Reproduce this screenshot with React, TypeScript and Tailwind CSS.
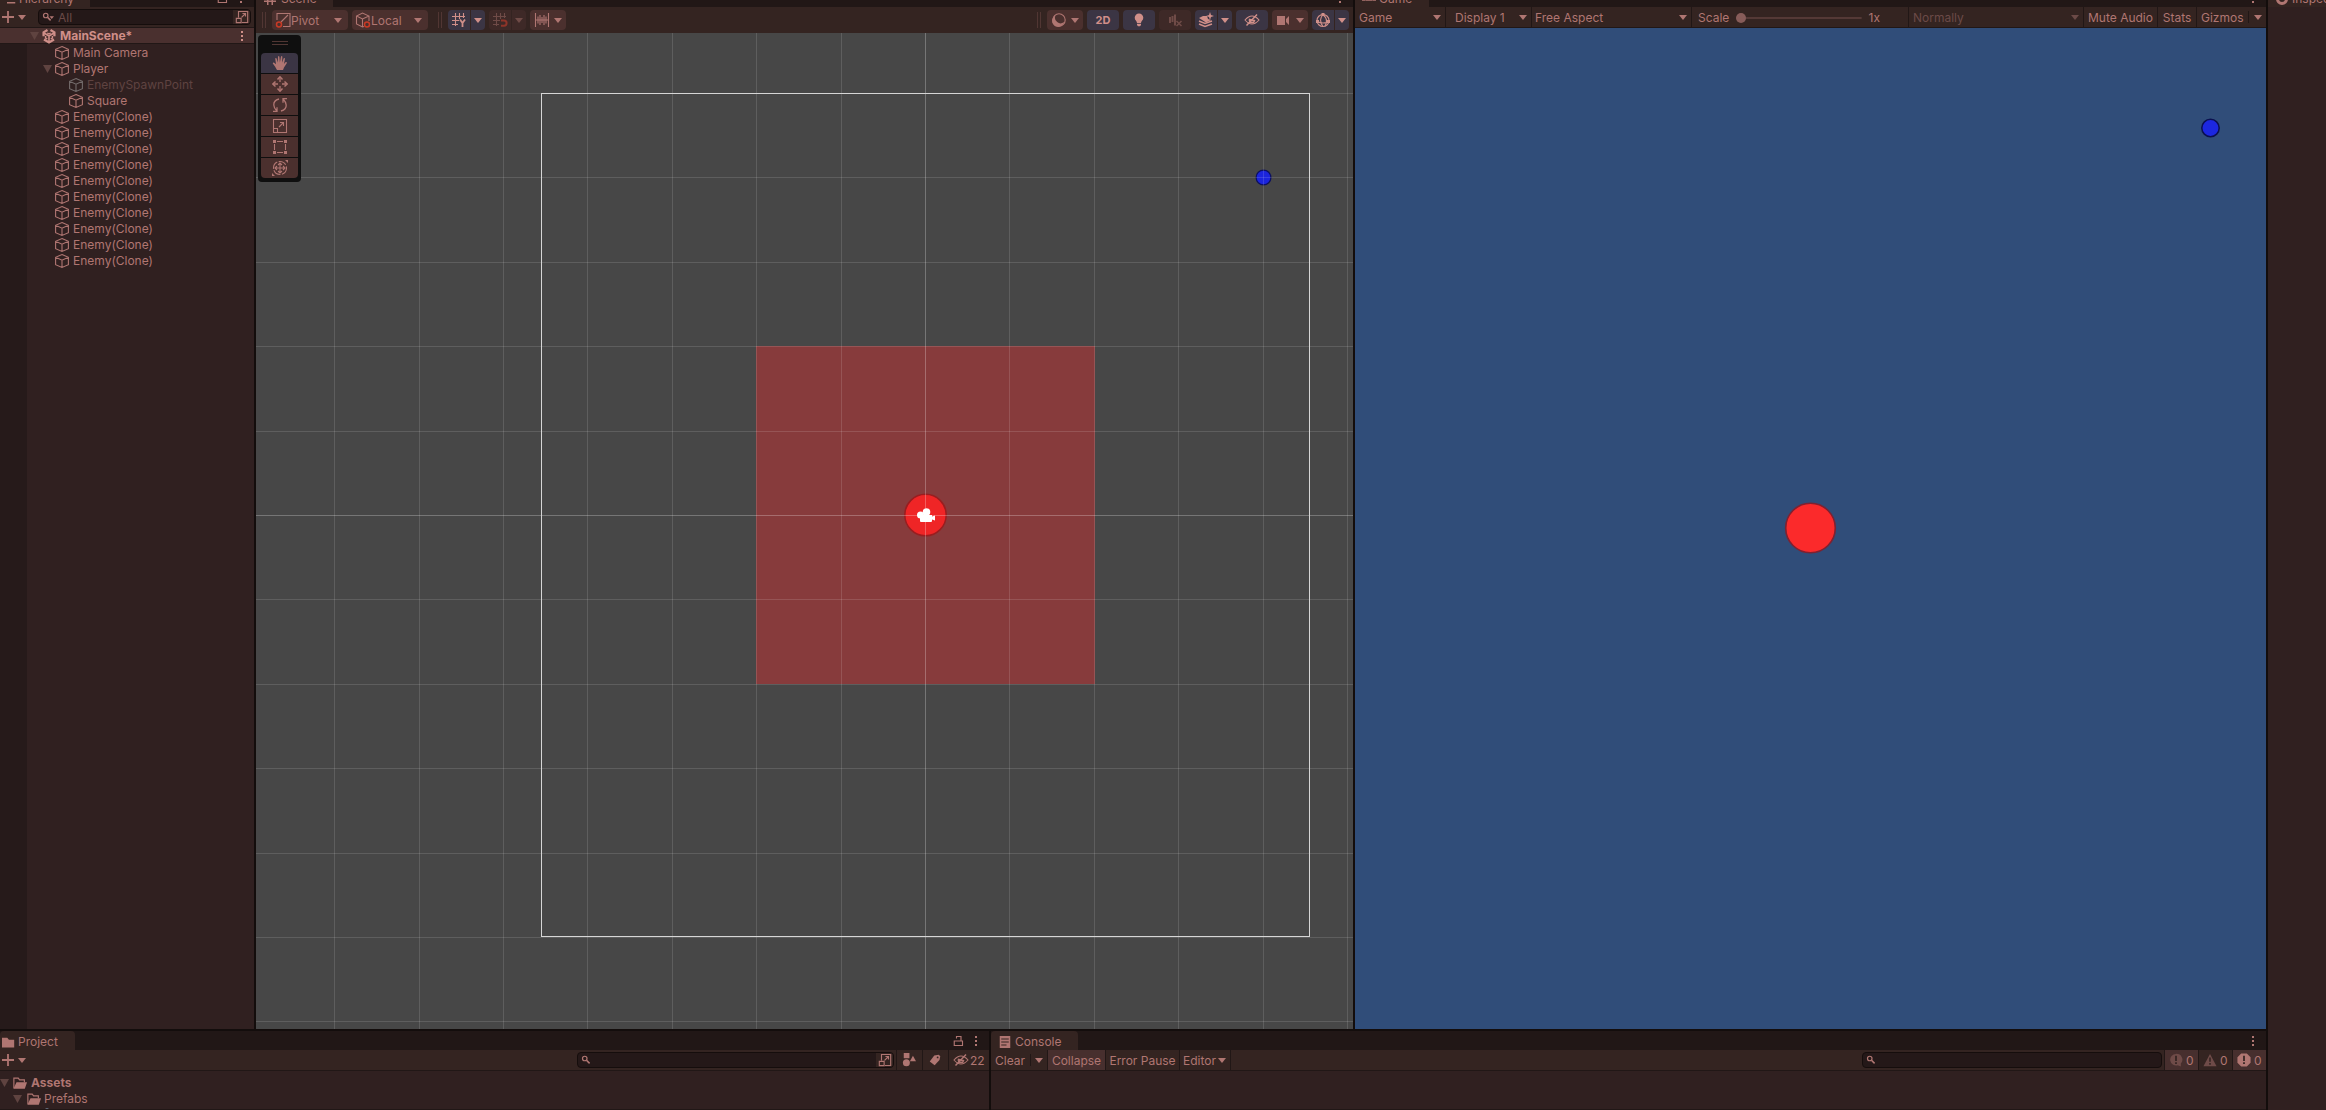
import { useState, type ReactNode } from "react";

const iconCls = "size-4 shrink-0";

function Svg({ children, className = iconCls }: { children: ReactNode; className?: string }) {
  return (
    <svg viewBox="0 0 16 16" className={className} fill="none" stroke="currentColor" strokeWidth="1.1" aria-hidden="true">
      {children}
    </svg>
  );
}

function Caret({ className = "" }: { className?: string }) {
  return (
    <svg viewBox="0 0 8 5" className={`h-[5px] w-2 shrink-0 ${className}`} fill="currentColor" aria-hidden="true">
      <path d="M0 0h8L4 5z" />
    </svg>
  );
}

function Foldout() {
  return (
    <svg viewBox="0 0 9 8" className="h-2 w-[9px] shrink-0 text-[#5f4340]" fill="currentColor" aria-hidden="true">
      <path d="M0 0h9L4.5 8z" />
    </svg>
  );
}

const CubeIcon = ({ className }: { className?: string }) => (
  <Svg className={className}>
    <path d="M8 1.5 14.400 4.300v7.400L8 14.500 1.600 11.700V4.300zM1.600 4.300 8 7.200l6.400-2.900M8 7.200v7.300" />
  </Svg>
);

const UnityIcon = () => (
  <Svg>
    <g strokeWidth="2.3">
      <path d="M8 8 8 14.500M8 8 3 5M8 8l5-3" strokeWidth="1.6" />
      <path d="M6.500 2 2.600 4.300v4M9.500 2l3.900 2.300v4M3 11.400l5 3 5-3" />
      <path d="M6.300 5 8 6l1.700-1M4.600 8v2L6.300 11M11.400 8v2L9.700 11" strokeWidth="1.4" />
    </g>
  </Svg>
);

const SearchIcon = ({ menu = false }: { menu?: boolean }) => (
  <Svg className="size-3 shrink-0">
    <circle cx="5" cy="6" r="3" strokeWidth="1.6" />
    <path d="M7.500 8.500 11.500 12.500" strokeWidth="2" />
    {menu && <path d="M10 7h6l-3 3.500z" fill="currentColor" stroke="none" />}
  </Svg>
);

const PickerIcon = () => (
  <Svg className="size-[14px] shrink-0">
    <path d="M4 8.500V1.700h10.500v12.600H8M1.500 9.500H7v5H1.500zM7.500 8.500 12 4M8.500 4H12v3.500" strokeWidth="1.3" />
  </Svg>
);

const PlusIcon = () => (
  <Svg className="size-3 shrink-0">
    <path d="M8 0v16M0 8h16" strokeWidth="2.4" />
  </Svg>
);

const KebabIcon = () => (
  <svg viewBox="0 0 2 10" className="h-[10px] w-[2px] shrink-0" fill="currentColor" aria-hidden="true">
    <path d="M0 0h2v2H0zM0 4h2v2H0zM0 8h2v2H0z" />
  </svg>
);

const LockIcon = () => (
  <Svg className="size-3 shrink-0">
    <path d="M3 8h11v6H3zM6 4.500V2h6v6" strokeWidth="1.5" />
  </Svg>
);

const HiddenEyeIcon = () => (
  <Svg>
    <path d="M1 8q7-8 14 0-7 8-14 0z" />
    <path d="M5.500 7.500a2.500 2.500 0 0 0 5 1zM2.500 13.500 13 2.500" strokeWidth="1.5" />
  </Svg>
);

const FolderIcon = ({ open = false }: { open?: boolean }) =>
  open ? (
    <Svg className="size-[14px] shrink-0">
      <path d="M1 14V2.500h5l1.500 2H13V7" strokeWidth="1.3" />
      <path d="M4 7h12l-2.500 7.500h-13z" fill="currentColor" stroke="none" />
    </Svg>
  ) : (
    <Svg className="size-[13px] shrink-0">
      <path d="M0 2h6.500l2 2.500H15V14H0z" fill="currentColor" stroke="none" />
    </Svg>
  );

const GridIcon = ({ children }: { children?: ReactNode }) => (
  <Svg>
    <path d="M4.500 1v13M8.500 1v6M12.500 1v5M1 4.500h13M1 8.500h7M1 12.500h6" />
    {children}
  </Svg>
);

const TOOLS: { name: string; icon: ReactNode }[] = [
  {
    name: "View",
    icon: (
      <Svg>
        <path
          d="M5 15 3 11.500.8 8.400q0-1.200 1.400-.6L4 9.300 3.200 3.600q.4-1.200 1.300-.3L5.800 7.600 6 1.700q.6-1.200 1.400 0L7.900 7.400 9 1.500q.8-1 1.400.2L10 7.800l1.700-4.500q.9-.8 1.300.3L12 9l1.700-2q1.400-.2 1.200.9L12 12.500 11 15z"
          fill="currentColor"
          stroke="none"
        />
      </Svg>
    ),
  },
  {
    name: "Move",
    icon: (
      <Svg>
        <path d="M8 2v4M8 10v4M2 8h4M10 8h4" strokeWidth="1.3" />
        <path d="M5.500 3.500 8 .8l2.500 2.700M5.500 12.500 8 15.200l2.500-2.700M3.500 5.500.8 8l2.700 2.500M12.500 5.500 15.200 8l-2.700 2.500" strokeWidth="1.5" />
      </Svg>
    ),
  },
  {
    name: "Rotate",
    icon: (
      <Svg>
        <path d="M7 2Q1.500 3.500 1.800 8q.2 3 2.700 5.500M9 14q5.500-1.500 5.200-6-.2-3-2.700-5.500M1 14.300h4v-4M15 1.700h-4v4" strokeWidth="1.3" />
      </Svg>
    ),
  },
  {
    name: "Scale",
    icon: (
      <Svg>
        <path d="M1.500 1.500h13v13h-13zM1.500 10.500h4v4M7 9l4.500-4.500M8 4.500h3.500V8" />
      </Svg>
    ),
  },
  {
    name: "Rect",
    icon: (
      <Svg>
        <path d="M5 2.500h6M5 13.500h6M2.500 5v6M13.500 5v6" />
        <path d="M1 1h3v3H1zM12 1h3v3h-3zM1 12h3v3H1zM12 12h3v3h-3z" fill="currentColor" stroke="none" />
      </Svg>
    ),
  },
  {
    name: "Transform",
    icon: (
      <Svg>
        <circle cx="8" cy="8" r="6.500" strokeDasharray="8 1.500" />
        <path d="M8 3v10M3 8h10M6 5l2-2 2 2M6 11l2 2 2-2M5 6 3 8l2 2M11 6l2 2-2 2" />
        <path d="M13 0h3v3zM0 13v3h3z" fill="currentColor" stroke="none" />
      </Svg>
    ),
  },
];

function Tab({ icon, className = "", children }: { icon: ReactNode; className?: string; children: ReactNode }) {
  return (
    <button type="button" className={`flex h-[19px] shrink-0 items-center rounded-t-sm bg-[#342421] pt-[3px] ${className}`}>
      {icon}
      {children}
    </button>
  );
}

function TopTabs({ tab, children }: { tab: ReactNode; children?: ReactNode }) {
  return (
    <div className="flex h-[7px] shrink-0 items-end overflow-hidden bg-[#211716]">
      {tab}
      <div className="ml-auto flex h-[19px] shrink-0 items-center gap-3 pr-3">{children}</div>
    </div>
  );
}

function SearchBox({ id, label, menu = false, placeholder, picker = false, className = "" }: {
  id: string;
  label: string;
  menu?: boolean;
  placeholder?: string;
  picker?: boolean;
  className?: string;
}) {
  return (
    <div className={`flex h-4 items-center overflow-hidden rounded border border-[#150d0c] bg-[#241818] ${className}`}>
      <label htmlFor={id} aria-label={label} className="pl-[3px]">
        <SearchIcon menu={menu} />
      </label>
      <input id={id} placeholder={placeholder} className="h-full min-w-0 flex-1 bg-transparent pl-1 outline-none placeholder:text-[#6b4a47]" />
      {picker && (
        <button type="button" aria-label="Search picker" className="flex h-full w-[17px] items-center justify-center bg-[#342421]">
          <PickerIcon />
        </button>
      )}
    </div>
  );
}

function Dropdown({ label, options, className = "", icon, caret = "right-1" }: {
  label: string;
  options: string[];
  className?: string;
  icon?: ReactNode;
  caret?: string;
}) {
  return (
    <label className={`relative flex h-5 shrink-0 items-center ${className}`}>
      {icon}
      <select aria-label={label} className="h-full w-full appearance-none bg-transparent pt-px outline-none">
        {options.map((o) => (
          <option key={o}>{o}</option>
        ))}
      </select>
      <Caret className={`pointer-events-none absolute ${caret}`} />
    </label>
  );
}

function ToolButton({ label, className, children }: { label: string; className: string; children: ReactNode }) {
  return (
    <button type="button" aria-label={label} className={`flex h-5 shrink-0 items-center justify-center ${className}`}>
      {children}
    </button>
  );
}

const on = "bg-[#3b3544] text-[#d08f89]";
const off = "bg-[#4b302e]";
const dim = "bg-[#3e2927] text-[#6f4b47]";

function Split({ label, tone, children }: { label: string; tone: string; children: ReactNode }) {
  return (
    <div className="flex gap-px">
      <ToolButton label={label} className={`w-[22px] rounded-l-sm ${tone}`}>{children}</ToolButton>
      <ToolButton label={`${label} options`} className={`w-[14px] rounded-r-sm ${tone}`}>
        <Caret />
      </ToolButton>
    </div>
  );
}

const Grip = () => <div className="h-4 w-1 shrink-0 border-x border-[#513633]" />;

function Row({ depth, name, open = false, disabled = false }: { depth: 1 | 2; name: string; open?: boolean; disabled?: boolean }) {
  return (
    <li className={`flex h-4 items-center gap-[3px] ${depth === 1 ? "pl-[43px]" : "pl-[57px]"}`}>
      <span className="flex w-3 shrink-0 justify-start">{open && <Foldout />}</span>
      <CubeIcon className={`-ml-1 size-4 shrink-0 ${disabled ? "text-[#736b6b]" : ""}`} />
      <span className={disabled ? "text-[#5f4341]" : ""}>{name}</span>
    </li>
  );
}

function Hierarchy() {
  return (
    <section className="flex w-[254px] shrink-0 flex-col bg-[#302020]">
      <TopTabs tab={<Tab className="w-[90px] gap-[3px] pl-1" icon={<Svg className="size-3"><path d="M1 3h8M4 8h11M4 13h11" strokeWidth="2" /></Svg>}>Hierarchy</Tab>}>
        <LockIcon />
        <KebabIcon />
      </TopTabs>
      <div className="flex h-[21px] shrink-0 items-center border-b border-[#211716] bg-[#342421] pr-[3px] pl-[2px]">
        <button type="button" aria-label="Create" className="flex items-center gap-1">
          <PlusIcon />
          <Caret />
        </button>
        <SearchBox id="hierarchy-search" label="Search hierarchy" menu placeholder="All" picker className="ml-3 flex-1" />
      </div>
      <div className="flex h-4 shrink-0 items-center border-b border-[#211716] bg-[#4a302f] pr-[11px] pl-[30px] font-bold text-[#d08f89]">
        <Foldout />
        <span className="ml-[2px] flex">
          <UnityIcon />
        </span>
        <span className="ml-[3px]">MainScene*</span>
        <span className="ml-auto">
          <KebabIcon />
        </span>
      </div>
      <div className="flex min-h-0 flex-1">
        <div className="w-[27px] shrink-0 bg-[#261a1a]" />
        <ul className="-ml-[27px] flex-1 pt-px">
          <Row depth={1} name="Main Camera" />
          <Row depth={1} name="Player" open />
          <Row depth={2} name="EnemySpawnPoint" disabled />
          <Row depth={2} name="Square" />
          {Array.from({ length: 10 }, (_, i) => (
            <Row key={i} depth={1} name="Enemy(Clone)" />
          ))}
        </ul>
      </div>
    </section>
  );
}

const UNIT = 84.4;
const CX = 925.5;
const CY = 515.5;
const COLUMNS = [-7, -6, -5, -4, -3, -2, -1, 0, 1, 2, 3, 4, 5];
const LINES = [-5, -4, -3, -2, -1, 0, 1, 2, 3, 4, 5, 6];
const snap = (v: number) => Math.floor(v) + 0.5;

function GridLines({ opacity }: { opacity: number }) {
  return (
    <g stroke="#fff">
      {COLUMNS.map((c) => (
        <path key={c} d={`M${snap(CX + c * UNIT)} 0V1110`} strokeOpacity={c === 0 ? 0.26 : opacity} />
      ))}
      {LINES.map((l) => (
        <path key={l} d={`M0 ${snap(CY + l * UNIT)}H2326`} strokeOpacity={l === 0 ? 0.26 : opacity} />
      ))}
    </g>
  );
}

function SceneCanvas() {
  return (
    <svg viewBox="256 33 1097 996" preserveAspectRatio="xMidYMid slice" className="block h-full w-full bg-[#474747]" role="img" aria-label="Scene">
      <rect x="756" y="346" width="339" height="338" fill="#873b3c" />
      <circle cx="925.5" cy="515" r="20.700" fill="#ef2526" stroke="#9a1d1f" strokeWidth="1.5" />
      <circle cx="1263.5" cy="177.5" r="7.400" fill="#1b24dc" stroke="#0c1060" strokeWidth="1.2" />
      <GridLines opacity={0.13} />
      <rect x="541.5" y="93.5" width="768" height="843" fill="none" stroke="#d6d6d6" />
      <g fill="#fff">
        <circle cx="920.5" cy="515" r="3.500" />
        <circle cx="926.5" cy="512" r="3.800" />
        <path d="M920 515h12v1.500l3-1v5l-3-1v1.500q0 1-1 1h-10q-1 0-1-1z" />
      </g>
    </svg>
  );
}

function Scene() {
  const [tool, setTool] = useState("View");

  return (
    <section className="flex min-w-0 flex-[1097] flex-col">
      <TopTabs tab={<Tab className="w-[77px] gap-[5px] pl-2" icon={<Svg className="size-3"><path d="M5 0v16M11 0v16M0 5h16M0 11h16" strokeWidth="2" /></Svg>}>Scene</Tab>}>
        <KebabIcon />
      </TopTabs>
      <div className="flex h-[26px] shrink-0 items-center gap-1 bg-[#342421] pr-1 pl-[6px]">
        <Grip />
        <Dropdown
          label="Tool handle position"
          options={["Pivot", "Center"]}
          className={`ml-[2px] w-[76px] rounded-sm pl-[3px] ${off}`}
          caret="right-[6px]"
          icon={
            <Svg>
              <path d="M2 8V1.500h13v13H8M6 10l7-7" />
              <circle cx="4" cy="12.5" r="2.500" stroke="#c93a25" strokeWidth="1.5" />
            </Svg>
          }
        />
        <Dropdown
          label="Tool handle rotation"
          options={["Local", "Global"]}
          className={`w-[76px] rounded-sm pl-[3px] ${off}`}
          caret="right-[6px]"
          icon={
            <Svg>
              <path d="M9 14.500 7.500 15 1.500 12V4l6-3 6.500 3v5M1.500 4l6 3L14 4M7.500 7v8" />
              <circle cx="12" cy="12.5" r="2.500" stroke="#c93a25" strokeWidth="1.5" />
            </Svg>
          }
        />
        <div className="mr-[2px] ml-[6px]">
          <Grip />
        </div>
        <Split label="Grid visibility" tone={on}>
          <GridIcon>
            <path d="m9 7.500 2.500 3.500L14 7.500M11.500 11v4" strokeWidth="1.8" />
          </GridIcon>
        </Split>
        <Split label="Grid snapping" tone={dim}>
          <GridIcon>
            <path d="M9 8.500h3a2.600 2.600 0 0 1 0 5.200H9" stroke="#8f3429" strokeWidth="2" />
          </GridIcon>
        </Split>
        <ToolButton label="Increment snapping" className={`w-9 gap-1 rounded-sm ${off}`}>
          <Svg>
            <path d="M1.500 1v14M14.500 1v14M4 4.500v7M6 3v10M8 5v6M10 3v10M12 4.500v7M1 8h14" />
          </Svg>
          <Caret />
        </ToolButton>
        <div className="mr-[2px] ml-auto">
          <Grip />
        </div>
        <ToolButton label="Draw mode" className={`w-9 gap-1 rounded-sm ${off}`}>
          <Svg>
            <circle cx="8" cy="8" r="6.200" />
            <path d="M13 10A5.500 5.500 0 0 1 4.500 3.500 6 6 0 1 0 13 10z" fill="currentColor" stroke="none" />
          </Svg>
          <Caret />
        </ToolButton>
        <ToolButton label="2D view" className={`w-8 rounded-sm text-[11px] font-bold ${on}`}>2D</ToolButton>
        <ToolButton label="Scene lighting" className={`w-8 rounded-sm ${on}`}>
          <Svg>
            <path d="M8 1.500a4.300 4.300 0 0 0-4.300 4.300C3.700 8.500 6 9 6 11h4c0-2 2.300-2.500 2.300-5.200A4.300 4.300 0 0 0 8 1.500zM6 11.800h4V13l-1 1.300H7L6 13z" fill="currentColor" stroke="none" />
          </Svg>
        </ToolButton>
        <ToolButton label="Scene audio" className={`w-8 rounded-sm ${dim}`}>
          <Svg>
            <path d="M3 5v6M5.500 4v6M8 2.500v11" strokeWidth="2" />
            <path d="m9.500 9 5 5M14.500 9l-5 5" strokeWidth="1.5" />
          </Svg>
        </ToolButton>
        <Split label="Scene effects" tone={on}>
          <Svg>
            <path d="M1 6 5 4h4l1 3 3 1-5 2.500z" fill="currentColor" stroke="none" />
            <path d="m1 9 6 2.500L14 9M1 12l6 2.500L14 12" strokeWidth="1.5" />
            <path d="m12 0 1 3 3 1-3 1-1 3-1-3-3-1 3-1z" fill="currentColor" stroke="none" />
          </Svg>
        </Split>
        <ToolButton label="Scene visibility" className={`w-8 rounded-sm ${on}`}>
          <HiddenEyeIcon />
        </ToolButton>
        <ToolButton label="Scene camera" className={`w-9 gap-1 rounded-sm ${off}`}>
          <Svg>
            <path d="M1 4h8v9H1zM10 7l3-3v9l-3-3z" fill="currentColor" stroke="none" />
          </Svg>
          <Caret />
        </ToolButton>
        <Split label="Gizmos" tone={on}>
          <Svg>
            <circle cx="8" cy="8.5" r="6" />
            <path d="M8 2.500Q3 8 8 14.500M8 2.500Q14 8 10 14M2 9.500q6 3 12 0" />
            <path d="M6.500 1h3v3h-3zM1 8h3v3H1zM12 8h3v3h-3z" fill="currentColor" stroke="none" />
          </Svg>
        </Split>
      </div>
      <div className="relative min-h-0 flex-1">
        <SceneCanvas />
        <div className="absolute top-[2px] left-[2px] flex w-[43px] flex-col items-center rounded bg-[#0f0f0f] px-[3px] pt-[6px] pb-1">
          <div className="mb-2 h-1 w-4 border-y border-[#513633]" />
          <div className="flex w-full flex-col gap-px overflow-hidden rounded-sm">
            {TOOLS.map((t) => (
              <button
                key={t.name}
                type="button"
                aria-label={t.name}
                aria-pressed={tool === t.name}
                onClick={() => setTool(t.name)}
                className={`flex h-5 items-center justify-center ${tool === t.name ? "bg-[#3b3544]" : "bg-[#4b302e]"}`}
              >
                {t.icon}
              </button>
            ))}
          </div>
        </div>
      </div>
    </section>
  );
}

const cell = "flex h-5 shrink-0 items-center justify-center border-r border-[#211716] pt-px";

function Game() {
  return (
    <section className="flex min-w-0 flex-[911] flex-col">
      <TopTabs tab={<Tab className="w-[74px] gap-[3px] pl-[7px]" icon={<Svg className="size-[14px]"><path d="M1 10a3 3 0 0 1 6 0M9 10a3 3 0 0 1 6 0" strokeWidth="5" /></Svg>}>Game</Tab>}>
        <KebabIcon />
      </TopTabs>
      <div className="flex h-[21px] shrink-0 items-center border-b border-[#211716] bg-[#342421]">
        <Dropdown label="View type" options={["Game", "Simulator"]} className="w-[91px] border-r border-[#211716] pl-1" />
        <Dropdown label="Display" options={["Display 1", "Display 2"]} className="w-[86px] border-r border-[#211716] pl-[9px]" />
        <Dropdown label="Aspect" options={["Free Aspect", "16:9 Aspect"]} className="w-40 border-r border-[#211716] pl-[3px]" />
        <div className="flex h-5 min-w-0 flex-1 items-center border-r border-[#211716] pt-px pr-[28px] pl-[6px]">
          <label htmlFor="scale">Scale</label>
          <input
            id="scale"
            type="range"
            min={1}
            max={5}
            step={0.1}
            defaultValue={1}
            className="mx-[7px] h-[10px] min-w-0 flex-1 appearance-none bg-[linear-gradient(#543936,#543936)] bg-[length:100%_2px] bg-center bg-no-repeat [&::-webkit-slider-thumb]:size-[10px] [&::-webkit-slider-thumb]:appearance-none [&::-webkit-slider-thumb]:rounded-full [&::-webkit-slider-thumb]:bg-[#875c59]"
          />
          <output htmlFor="scale">1x</output>
        </div>
        <Dropdown label="Play mode focus" options={["Normally", "Maximized"]} className="w-[175px] border-r border-[#211716] pl-1 text-[#6b4a47]" />
        <button type="button" className={`${cell} w-[74px]`}>Mute Audio</button>
        <button type="button" className={`${cell} w-[39px]`}>Stats</button>
        <button type="button" className="flex h-5 w-[51px] shrink-0 items-center pt-px pl-1">Gizmos</button>
        <button type="button" aria-label="Gizmo options" className="flex h-3 w-[18px] shrink-0 items-center justify-center border-l border-[#211716]">
          <Caret />
        </button>
      </div>
      <svg viewBox="1355 28 911 1001" preserveAspectRatio="xMidYMid slice" className="block min-h-0 w-full flex-1 bg-[#304d79]" role="img" aria-label="Game view">
        <circle cx="1810.5" cy="528" r="24.800" fill="#fb2a2b" stroke="#7f2130" strokeWidth="1.6" />
        <circle cx="2210.5" cy="128" r="8.700" fill="#1c27e0" stroke="#0b1050" strokeWidth="1.5" />
      </svg>
    </section>
  );
}

function Project() {
  return (
    <section className="flex min-w-0 flex-[989] flex-col bg-[#302020]">
      <div className="flex h-[19px] shrink-0 items-end bg-[#211716]">
        <Tab className="w-[75px] gap-[3px] pl-[2px]" icon={<FolderIcon />}>Project</Tab>
        <div className="ml-auto flex h-full items-center gap-[11px] pr-3">
          <LockIcon />
          <KebabIcon />
        </div>
      </div>
      <div className="flex h-[21px] shrink-0 items-center border-b border-[#211716] bg-[#342421] pl-[2px]">
        <button type="button" aria-label="Create asset" className="flex items-center gap-1">
          <PlusIcon />
          <Caret />
        </button>
        <SearchBox id="project-search" label="Search project" picker className="mr-[2px] ml-auto w-[317px]" />
        <button type="button" aria-label="Search by type" className="flex h-5 w-[26px] items-center border-l border-[#211716] pl-[5px]">
          <Svg className="size-[14px]">
            <path d="M2 0h6.500v6H2zM9 9.500 12.500 3 16 9.500z" fill="currentColor" stroke="none" />
            <circle cx="5" cy="11" r="4" fill="currentColor" stroke="none" />
          </Svg>
        </button>
        <button type="button" aria-label="Search by label" className="flex h-5 w-[26px] items-center border-l border-[#211716] pl-[6px]">
          <Svg className="size-3">
            <path d="m1 10 6-8 6-1 2 2-1 5-6.500 7z" fill="currentColor" stroke="none" />
            <circle cx="11.5" cy="4.5" r="1.200" fill="#342421" stroke="none" />
          </Svg>
        </button>
        <button type="button" aria-label="Hidden packages" className="flex h-5 w-[41px] items-center border-l border-[#211716] pl-1">
          <HiddenEyeIcon />
          <span className="pt-px pl-px">22</span>
        </button>
      </div>
      <ul className="min-h-0 flex-1 overflow-hidden border-b border-[#211716] pt-1">
        <li className="flex h-4 items-center font-bold">
          <Foldout />
          <span className="mx-1 flex">
            <FolderIcon open />
          </span>
          Assets
        </li>
        <li className="flex h-4 items-center pl-[13px]">
          <Foldout />
          <span className="mr-[3px] ml-[5px] flex">
            <FolderIcon open />
          </span>
          Prefabs
        </li>
        <li className="flex h-4 items-start pt-px pl-10 text-[#6b7a8c]">
          <Svg className="size-[14px] shrink-0">
            <path d="m8 0 6.500 3v8.500L8 15l-6.500-3.500V3z" fill="currentColor" stroke="none" />
          </Svg>
        </li>
      </ul>
    </section>
  );
}

function CountToggle({ label, pressed, icon, tone = "" }: { label: string; pressed: boolean; icon: ReactNode; tone?: string }) {
  return (
    <button
      type="button"
      aria-label={label}
      aria-pressed={pressed}
      className={`flex h-5 w-[34px] shrink-0 items-center gap-[3px] border-l border-[#211716] pl-1 ${pressed ? "bg-[#472f2e]" : ""}`}
    >
      <span className={tone}>{icon}</span>
      <span className="pt-px">0</span>
    </button>
  );
}

function Console() {
  return (
    <section className="flex min-w-0 flex-[1275] flex-col bg-[#302020]">
      <div className="flex h-[19px] shrink-0 items-end bg-[#211716] pr-3">
        <Tab
          className="w-[87px] gap-1 pl-2"
          icon={
            <Svg className="size-3">
              <path d="M1 0h14v16H1z" fill="currentColor" stroke="none" />
              <path d="M3 4h10M3 8h10M3 12h7" stroke="#342421" strokeWidth="1.5" />
            </Svg>
          }
        >
          Console
        </Tab>
        <span className="mb-1 ml-auto">
          <KebabIcon />
        </span>
      </div>
      <div className="flex h-[21px] shrink-0 items-center border-b border-[#211716] bg-[#342421]">
        <button type="button" className="flex h-5 w-[39px] shrink-0 items-center pt-px pl-1">Clear</button>
        <button type="button" aria-label="Clear options" className="flex h-3 w-[17px] shrink-0 items-center justify-center border-l border-[#211716]">
          <Caret />
        </button>
        <button type="button" className={`${cell} w-[59px] border-l bg-[#472f2e]`}>Collapse</button>
        <button type="button" className={`${cell} w-[74px]`}>Error Pause</button>
        <Dropdown label="Log target" options={["Editor", "Player"]} className="w-[51px] border-r border-[#211716] pl-[3px]" />
        <SearchBox id="console-search" label="Search console" className="mr-[2px] ml-auto w-[300px]" />
        <CountToggle
          label="Messages"
          pressed
          tone="text-[#6f4b48]"
          icon={
            <Svg className="size-[14px]">
              <path d="M8 1a7 6.600 0 1 0 2 13l3.500 1.500V12A7 6.600 0 0 0 8 1z" fill="currentColor" stroke="none" />
              <path d="M8 3v6M8 10.500v2" stroke="#342421" strokeWidth="2" />
            </Svg>
          }
        />
        <CountToggle
          label="Warnings"
          pressed={false}
          tone="text-[#6f4b48]"
          icon={
            <Svg className="size-[14px]">
              <path d="M8 1 15.500 15H.5z" fill="currentColor" stroke="none" />
              <path d="M8 5v5M8 11.500v2" stroke="#342421" strokeWidth="1.8" />
            </Svg>
          }
        />
        <CountToggle
          label="Errors"
          pressed
          icon={
            <Svg className="size-[14px]">
              <path d="M4.800.5h6.400l4.300 4.300v6.400l-4.300 4.300H4.800L.5 11.200V4.800z" fill="currentColor" stroke="none" />
              <path d="M8 3v6M8 10.500v2" stroke="#342421" strokeWidth="2" />
            </Svg>
          }
        />
      </div>
      <div className="min-h-0 flex-1 border-b border-[#211716]" />
    </section>
  );
}

export default function App() {
  return (
    <div className="flex h-screen gap-[2px] overflow-hidden bg-[#130d0c] font-['Inter',sans-serif] text-[12px] leading-4 text-[#b07672]">
      <div className="flex min-w-0 flex-1 flex-col gap-[2px]">
        <div className="flex min-h-0 flex-1 gap-[2px]">
          <Hierarchy />
          <Scene />
          <Game />
        </div>
        <div className="flex h-[79px] shrink-0 gap-[2px]">
          <Project />
          <Console />
        </div>
      </div>
      <aside className="flex w-[58px] shrink-0 flex-col bg-[#302020]">
        <TopTabs
          tab={
            <Tab className="w-24 gap-1 pl-2" icon={<Svg className="size-3 shrink-0"><circle cx="8" cy="8" r="6" strokeWidth="4" /></Svg>}>
              Inspector
            </Tab>
          }
        />
      </aside>
    </div>
  );
}
